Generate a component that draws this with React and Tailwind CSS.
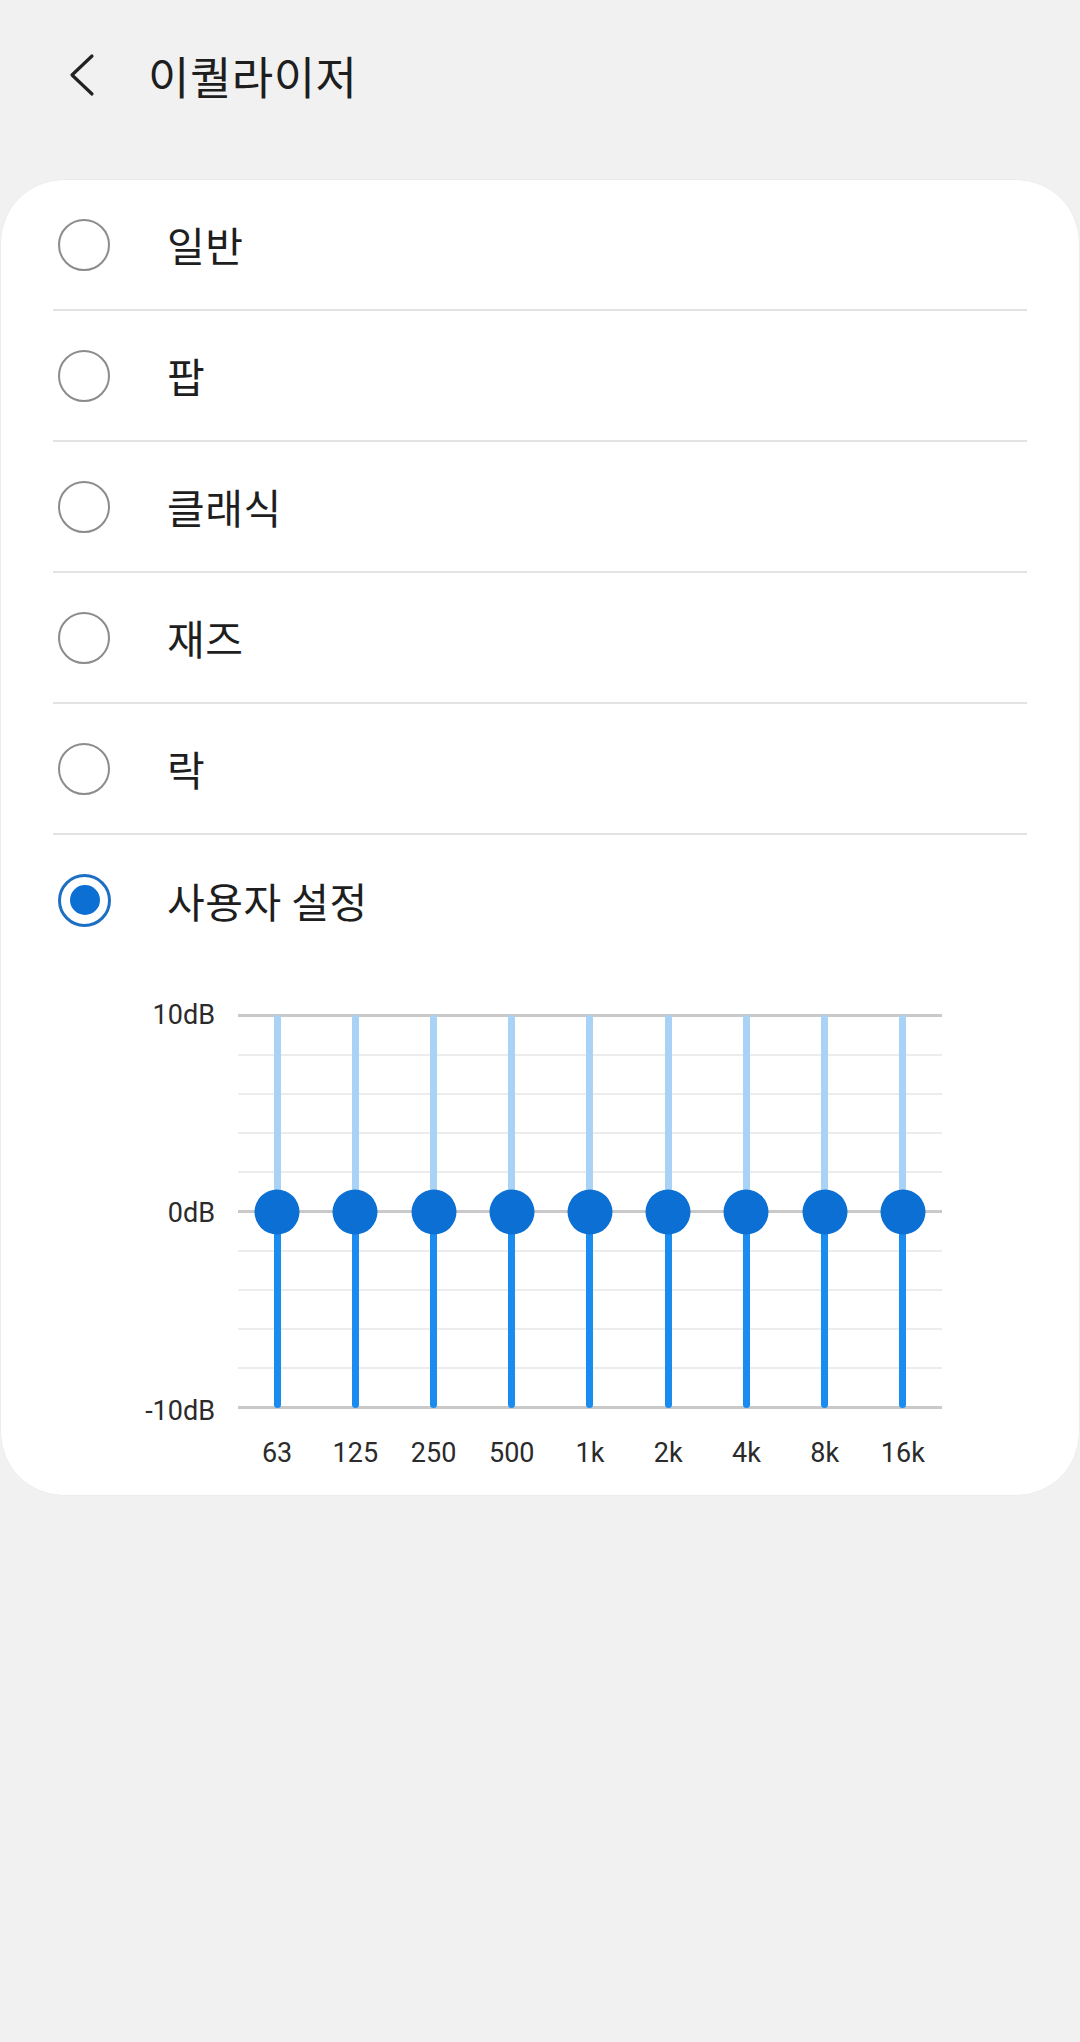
import React from "react";

const presets = ["일반", "팝", "클래식", "재즈", "락"];
const bands = ["63", "125", "250", "500", "1k", "2k", "4k", "8k", "16k"];

const Radio = ({ checked }) =>
  checked ? (
    <div className="w-[53px] h-[53px] rounded-full border-[3px] border-[#1c6fc4] flex items-center justify-center shrink-0">
      <div className="w-[30px] h-[30px] rounded-full bg-[#0b6fd3]"></div>
    </div>
  ) : (
    <div className="w-[52px] h-[52px] rounded-full border-[2.5px] border-[#8c8c8c] shrink-0"></div>
  );

const Row = ({ label, checked }) => (
  <div className="h-[129px] flex items-center pl-[57px]">
    <Radio checked={checked} />
    <span className="ml-[57px] text-[41px] leading-none text-[#1e1e1e] tracking-[0.5px]">
      {label}
    </span>
  </div>
);

const Chart = () => {
  // 11 grid lines: 10dB, 0dB and -10dB are the darker ones
  const lines = Array.from({ length: 11 }, (_, i) => i % 5 === 0);

  return (
    <div className="mt-[33px] pb-[25px]">
      <div className="flex items-start">
        {/* dB labels */}
        <div className="w-[214px] h-[430px] flex flex-col justify-between items-end font-['Roboto',sans-serif] text-[27px] leading-[34px] text-[#2b2b2b]">
          <span>10dB</span>
          <span>0dB</span>
          <span>-10dB</span>
        </div>

        <div className="ml-[23px] mt-[16px] w-[704px]">
          {/* plot */}
          <div className="relative h-[395px]">
            <div className="absolute inset-0 flex flex-col justify-between">
              {lines.map((major, i) =>
                major ? (
                  <div key={i} className="h-[3px] bg-[#c9c9c9]"></div>
                ) : (
                  <div key={i} className="h-[2px] bg-[#ececec]"></div>
                )
              )}
            </div>
            <div className="absolute inset-0 grid grid-cols-9">
              {bands.map((b) => (
                <div key={b} className="relative flex justify-center py-[1px]">
                  <div className="w-[7px] h-full rounded-full overflow-hidden flex flex-col">
                    <div className="flex-1 bg-[#a9d3f6]"></div>
                    <div className="flex-1 bg-[#1a8cf0]"></div>
                  </div>
                  <div className="absolute left-1/2 top-1/2 -translate-x-1/2 -translate-y-1/2 w-[45px] h-[45px] rounded-full bg-[#0b6fd3]"></div>
                </div>
              ))}
            </div>
          </div>

          {/* frequency labels */}
          <div className="grid grid-cols-9 mt-[27px] font-['Roboto',sans-serif] text-[27px] leading-[34px] text-[#2b2b2b]">
            {bands.map((b) => (
              <span key={b} className="text-center">
                {b}
              </span>
            ))}
          </div>
        </div>
      </div>
    </div>
  );
};

export default function App() {
  return (
    <div className="min-h-[2042px] w-full bg-[#f1f1f1] font-['Noto_Sans_CJK_KR','Noto_Sans',sans-serif]">
      {/* Header */}
      <div className="h-[150px] flex items-center">
        <svg
          className="ml-[68px] shrink-0"
          width="28"
          height="44"
          viewBox="0 0 28 44"
          fill="none"
        >
          <path
            d="M24 3 L4 22 L24 41"
            stroke="#222"
            strokeWidth="3.2"
            strokeLinecap="round"
            strokeLinejoin="round"
          />
        </svg>
        <h1 className="ml-[52px] text-[45px] leading-none text-[#1e1e1e] tracking-[0.5px]">
          이퀄라이저
        </h1>
      </div>

      {/* Card */}
      <div className="mt-[29px] bg-white rounded-[64px] border border-[#ececec]">
        {presets.map((p) => (
          <div key={p}>
            <Row label={p} />
            <div className="h-[2px] bg-[#e3e3e3] mx-[52px]"></div>
          </div>
        ))}
        <div className="h-[130px] flex items-center pl-[57px]">
          <Radio checked />
          <span className="ml-[56px] text-[41px] leading-none text-[#1e1e1e] tracking-[0.5px]">
            사용자 설정
          </span>
        </div>
        <Chart />
      </div>
    </div>
  );
}
